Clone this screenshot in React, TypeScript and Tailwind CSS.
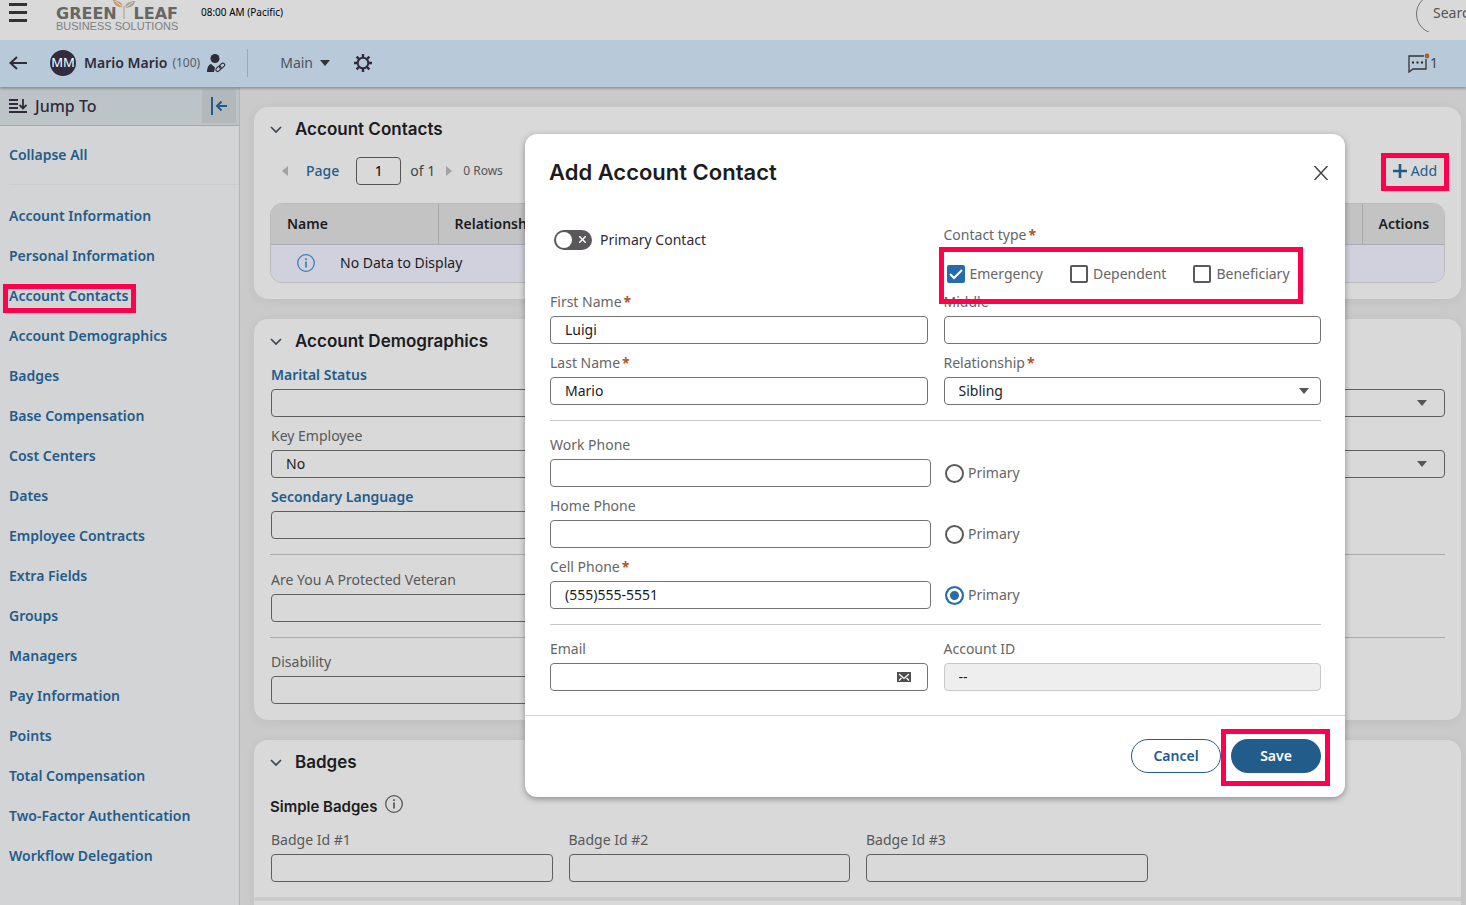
import clsx from 'clsx'
import type { ReactNode } from 'react'

const links = [
  'Account Information',
  'Personal Information',
  'Account Contacts',
  'Account Demographics',
  'Badges',
  'Base Compensation',
  'Cost Centers',
  'Dates',
  'Employee Contracts',
  'Extra Fields',
  'Groups',
  'Managers',
  'Pay Information',
  'Points',
  'Total Compensation',
  'Two-Factor Authentication',
  'Workflow Delegation',
]

const heading = "font-['Inter',sans-serif] font-semibold text-[#1c1c1f]"

// red frame drawn around the step the reader has to follow
function Highlight({ className }: { className: string }) {
  return <div className={clsx('pointer-events-none absolute z-10 border-5 border-[#ff004f]', className)} />
}

function Caret({ className }: { className?: string }) {
  return (
    <svg viewBox="0 0 10 6" className={clsx('h-[6px] w-[10px] fill-current', className)}>
      <path d="M0 0h10L5 6z" />
    </svg>
  )
}

function InfoIcon({ className }: { className: string }) {
  return (
    <svg viewBox="0 0 18 18" className={clsx('size-[18px] shrink-0 fill-none stroke-current', className)}>
      <circle cx="9" cy="9" r="8.3" strokeWidth="1.3" />
      <path d="M9 7.5v6M9 4.3v1.8" strokeWidth="1.7" />
    </svg>
  )
}

type FieldProps = {
  id: string
  label?: string
  value?: string
  required?: boolean
  strong?: boolean
  select?: boolean
  dim?: boolean
  disabled?: boolean
  className?: string
  children?: ReactNode
}

function Field({ id, label, value = '', required, strong, select, dim, disabled, className, children }: FieldProps) {
  const box = clsx(
    'h-7 w-full appearance-none rounded-[4px] border px-[14px] text-sm text-[#1c1c1f]',
    !select && 'pb-[2px]',
    disabled ? 'border-[#c9c9c9] bg-[#eeeeee]' : dim ? 'border-[#5f5f5f] bg-[#d9d9d9]' : 'border-[#737373] bg-white',
  )
  return (
    <div className={className}>
      <label
        htmlFor={id}
        className={clsx(
          'mb-[5px] block h-5 text-sm leading-[22px] whitespace-nowrap',
          strong ? 'font-semibold text-[#225c8b]' : dim ? 'text-[#56585a]' : 'text-[#666666]',
        )}
      >
        {label}
        {required && <span className="ml-[2px] font-bold text-[#a85a2a]">*</span>}
      </label>
      <div className="relative">
        {select ? (
          <select id={id} defaultValue={value} className={box}>
            <option>{value}</option>
          </select>
        ) : (
          <input id={id} defaultValue={value} disabled={disabled} className={box} />
        )}
        {select && (
          <Caret className={clsx('absolute top-[11px] text-[#555]', dim ? 'right-[18px]' : 'right-3')} />
        )}
        {children}
      </div>
    </div>
  )
}

function Card({ title, children }: { title: string; children: ReactNode }) {
  return (
    <section className="rounded-[14px] bg-[#d9d9d9] px-4 pb-4 shadow-[0_2px_12px_rgba(0,0,0,0.06)]">
      <div className="flex h-[45px] items-center">
        <svg viewBox="0 0 12 8" className="h-2 w-3 fill-none stroke-[#3c4650]">
          <path d="M1 1l5 5 5-5" strokeWidth="1.7" />
        </svg>
        <h2 className={clsx(heading, 'ml-[13px] text-[17px]')}>{title}</h2>
      </div>
      {children}
    </section>
  )
}

function Logo() {
  return (
    <div className="relative ml-[29px] w-[122px] pt-[5px] whitespace-nowrap">
      <svg viewBox="0 0 24 20" className="absolute top-0 left-14 h-5 w-6">
        <path d="M1 0c4 0 9 2 10 7C6 8 2 5 1 0z" fill="#c39a6b" />
        <path d="M23 1c-5 0-10 2-10 7 5 0 9-2 10-7z" fill="#a9a48e" />
        <path d="M3 1l8 6M21 2l-8 6" stroke="#dedad0" fill="none" />
        <path d="M12 6v13" stroke="#9c9c94" fill="none" />
      </svg>
      <div className="flex justify-between font-['DejaVu_Sans',sans-serif] text-base leading-[18px] font-bold text-[#666]">
        <span>GREEN</span>
        <span>LEAF</span>
      </div>
      <div className="font-['Liberation_Sans',sans-serif] text-[11px] leading-[6px] text-[#808080]">BUSINESS SOLUTIONS</div>
    </div>
  )
}

function TopBar() {
  return (
    <header className="flex h-10 shrink-0 bg-[#d9d9d9] pl-[9px]">
      <button aria-label="Menu" className="flex h-6 w-[18px] flex-col justify-center gap-[5px]">
        <span className="h-[3px] w-full bg-[#333]" />
        <span className="h-[3px] w-full bg-[#333]" />
        <span className="h-[3px] w-full bg-[#333]" />
      </button>
      <Logo />
      <span className="ml-[23px] text-[10px] leading-6 text-black">08:00 AM (Pacific)</span>
      <div className="ml-auto h-8 w-[50px] overflow-hidden">
        <input
          aria-label="Search"
          placeholder="Search"
          className="-mt-2 h-10 w-60 rounded-full border border-[#707070] px-4 pb-[2px] text-sm placeholder:text-[#555]"
        />
      </div>
    </header>
  )
}

function AccountBar() {
  return (
    <div className="z-10 flex h-[47px] shrink-0 items-center bg-[#b8c9d9] pr-7 pb-[2px] pl-[9px] text-[#2f2b3a] shadow-[0_2px_2px_rgba(0,0,0,0.25)]">
      <button aria-label="Back">
        <svg viewBox="0 0 18 14" className="h-[14px] w-[18px] fill-none stroke-current">
          <path d="M18 7H1.5M8 1L1.5 7 8 13" strokeWidth="2" />
        </svg>
      </button>
      <span className="ml-[23px] flex size-[26px] items-center justify-center rounded-full bg-[#322c3d] text-[13px] text-white">MM</span>
      <span className="ml-2 text-sm font-semibold">Mario Mario</span>
      <span className="ml-[5px] text-xs text-[#555b66]">(100)</span>
      <svg viewBox="0 0 20 20" className="ml-[6px] size-5">
        <circle cx="9" cy="5.5" r="4.5" fill="currentColor" />
        <path d="M1 19c0-5 2-7.500 4-8l4 3.500-1 4.500z" fill="currentColor" />
        <g fill="none" stroke="currentColor" strokeWidth="1.100">
          <rect x="9.500" y="14" width="6" height="3.600" rx="1.800" transform="rotate(-45 12.500 15.800)" />
          <rect x="13" y="11" width="6" height="3.600" rx="1.800" transform="rotate(-45 16 12.800)" />
        </g>
      </svg>
      <span className="ml-[21px] h-7 w-px bg-[#9aa9b8]" />
      <button className="ml-8 flex items-center gap-[7px] text-sm text-[#4d525c]">
        Main
        <Caret className="text-[#333]" />
      </button>
      <button aria-label="Settings" className="ml-[23px]">
        <svg viewBox="0 0 20 20" className="size-5 fill-none stroke-current">
          <circle cx="10" cy="10" r="5.300" strokeWidth="2" />
          <path
            d="M10 1v3.500M10 15.500V19M1 10h3.500M15.500 10H19M3.600 3.600l2.500 2.500M13.900 13.900l2.500 2.500M3.600 16.400l2.500-2.500M13.900 6.100l2.500-2.500"
            strokeWidth="2.400"
          />
        </svg>
      </button>
      <button aria-label="Messages" className="ml-auto flex items-center text-sm text-[#444]">
        <svg viewBox="0 0 22 20" className="h-5 w-[22px]">
          <path d="M1 3h17v13H5l-4 3z" fill="none" stroke="#333" strokeWidth="1.300" />
          <path d="M4 8.500h2v2H4zM8.500 8.500h2v2h-2zM13 8.500h2v2h-2z" fill="#222" />
          <circle cx="19" cy="3" r="3.200" fill="#b8c9d9" />
          <circle cx="19" cy="3" r="2.400" fill="#a8602c" />
        </svg>
        1
      </button>
    </div>
  )
}

function Sidebar() {
  return (
    <nav className="w-60 shrink-0 border-r border-[#b5b5b5] bg-[#d3d4d6] text-sm">
      <div className="flex h-[39px] items-center border-b border-[#a3a8aa] bg-[#bcc4c8] pl-[9px] text-[#2f2b3a]">
        <svg viewBox="0 0 18 14" className="h-[14px] w-[18px] fill-none stroke-current">
          <path d="M0 1h9M0 5h9M0 9h9M0 13h18M14 0v9M10.500 6l3.500 3.500L17.500 6" strokeWidth="1.800" />
        </svg>
        <span className="ml-2 text-base font-medium">Jump To</span>
        <button aria-label="Collapse panel" className="mr-[3px] ml-auto flex h-[34px] w-[34px] items-center justify-center bg-[#b3b9bb] text-[#225c8b]">
          <svg viewBox="0 0 16 18" className="h-[18px] w-4 fill-none stroke-current">
            <path d="M1 0v18M16 9H6M10.500 4.500L6 9l4.500 4.500" strokeWidth="2" />
          </svg>
        </button>
      </div>
      <div className="ml-[9px] flex h-[59px] items-center border-b border-[#c8cacc]">
        <button className="font-semibold text-[#225c8b]">Collapse All</button>
      </div>
      <ul className="mt-[11px] ml-[9px]">
        {links.map((link) => (
          <li key={link} className="flex h-10 items-center">
            <a href="#" className="relative font-semibold text-[#225c8b]">
              {link}
              {link === 'Account Contacts' && <Highlight className="-top-[2px] -right-2 -bottom-[7px] -left-[6px]" />}
            </a>
          </li>
        ))}
      </ul>
    </nav>
  )
}

function Contacts() {
  return (
    <Card title="Account Contacts">
      <div className="mt-[5px] flex h-7 items-center pr-2 pl-3 text-sm text-[#444]">
        <Caret className="-ml-[2px] rotate-90 text-[#a2a2a2]" />
        <label htmlFor="page" className="ml-4 font-medium text-[#225c8b]">Page</label>
        <input
          id="page"
          defaultValue="1"
          className="mr-[9px] ml-[17px] h-7 w-[45px] rounded-[4px] border border-[#555] pb-[2px] text-center text-black"
        />
        of 1
        <Caret className="ml-[9px] -rotate-90 text-[#a2a2a2]" />
        <span className="ml-[9px] text-xs text-[#555]">0 Rows</span>
        <button className="relative ml-auto flex items-center gap-1 text-[#225c8b]">
          <svg viewBox="0 0 14 14" className="size-[14px] stroke-current">
            <path d="M7 0v14M0 7h14" strokeWidth="2.600" />
          </svg>
          Add
          <Highlight className="-inset-x-3 -top-2 -bottom-[10px]" />
        </button>
      </div>
      <div className="mt-[18px] overflow-hidden rounded-xl border border-[#bababa]">
        <table className="w-full text-left text-sm text-[#1c1c1f]">
          <thead className="h-10 bg-[#c3c3c3]">
            <tr className="border-b border-[#a9abb0]">
              <th className="w-[167px] border-r border-[#a9a9a9] pl-4 font-semibold">Name</th>
              <th className="pl-4 font-semibold">Relationship</th>
              <th className="w-[82px] border-l border-[#a9a9a9] pl-4 font-semibold">Actions</th>
            </tr>
          </thead>
          <tbody>
            <tr className="h-[38px] bg-[#d0d1dc]">
              <td colSpan={3}>
                <div className="flex items-center gap-[25px] pl-[26px]">
                  <InfoIcon className="text-[#3a80b5]" />
                  No Data to Display
                </div>
              </td>
            </tr>
          </tbody>
        </table>
      </div>
    </Card>
  )
}

function Demographics() {
  return (
    <Card title="Account Demographics">
      <div className="grid grid-cols-4 gap-x-4 gap-y-2 pl-px">
        <Field id="marital" label="Marital Status" strong select dim />
        <Field id="ethnicity" className="col-start-4" select dim />
        <Field id="key" label="Key Employee" value="No" select dim />
        <Field id="language" className="col-start-4" select dim />
        <Field id="secondary" label="Secondary Language" strong select dim />
      </div>
      <hr className="mt-[15px] mb-[14px] border-[#a9a9a9]" />
      <div className="grid grid-cols-4 gap-x-4 pl-px">
        <Field id="veteran" label="Are You A Protected Veteran" select dim />
      </div>
      <hr className="mt-[15px] mb-[13px] border-[#a9a9a9]" />
      <div className="grid grid-cols-4 gap-x-4 pl-px">
        <Field id="disability" label="Disability" select dim />
      </div>
    </Card>
  )
}

function Badges() {
  return (
    <Card title="Badges">
      <div className="mt-[10px] flex h-6 items-center gap-2">
        <h3 className={clsx(heading, 'text-[15px]')}>Simple Badges</h3>
        <InfoIcon className="mb-[6px] text-[#555]" />
      </div>
      <div className="mt-[10px] grid grid-cols-4 gap-x-4 pl-px">
        <Field id="badge1" label="Badge Id #1" dim />
        <Field id="badge2" label="Badge Id #2" dim />
        <Field id="badge3" label="Badge Id #3" dim />
      </div>
      <div className="-mx-4 mt-[15px] h-1 bg-[#cbcbcb]" />
    </Card>
  )
}

function CheckOption({ label, checked }: { label: string; checked?: boolean }) {
  return (
    <label className="flex items-center gap-[5px]">
      <span className="relative flex">
        <input
          type="checkbox"
          defaultChecked={checked}
          className="size-[18px] appearance-none rounded-[2px] border-2 border-[#5a5a5a] bg-white checked:border-[#256ca8] checked:bg-[#256ca8]"
        />
        {checked && (
          <svg viewBox="0 0 18 18" className="pointer-events-none absolute inset-0 fill-none stroke-white">
            <path d="M3 9l4 4 8-8" strokeWidth="2" />
          </svg>
        )}
      </span>
      {label}
    </label>
  )
}

function PhoneRow({ id, label, value, primary, required }: { id: string; label: string; value?: string; primary?: boolean; required?: boolean }) {
  return (
    <div className="flex items-end gap-[14px]">
      <Field id={id} label={label} value={value} required={required} className="w-[381px]" />
      <label className="flex h-7 items-center gap-1">
        <input
          type="radio"
          name="primary-phone"
          defaultChecked={primary}
          className="size-[19px] appearance-none rounded-full border-2 border-[#5a5a5a] bg-white checked:border-[#256ca8] checked:bg-[#256ca8] checked:shadow-[inset_0_0_0_3px_white]"
        />
        Primary
      </label>
    </div>
  )
}

function ContactDialog() {
  return (
    <div
      role="dialog"
      aria-labelledby="dialog-title"
      className="w-[820px] rounded-xl bg-white text-sm text-[#666] shadow-[0_2px_6px_rgba(0,0,0,0.35)]"
    >
      <div className="flex h-[77px] items-center justify-between pr-[17px] pl-6">
        <h1 id="dialog-title" className={clsx(heading, 'text-[22px]')}>Add Account Contact</h1>
        <button aria-label="Close">
          <svg viewBox="0 0 14 14" className="size-[14px] fill-none stroke-[#444]">
            <path d="M.5 0l13 14M13.500 0L.5 14" strokeWidth="1.500" />
          </svg>
        </button>
      </div>
      <form className="px-6 pt-[14px] pb-6 pl-[25px]">
        <div className="grid h-[66px] grid-cols-2 gap-x-4">
          <label className="flex h-[30px] items-center gap-2 pl-1 text-[#2f2b3a]">
            <span className="relative flex">
              <input type="checkbox" role="switch" className="h-5 w-[38px] appearance-none rounded-full bg-[#5a585a]" />
              <span className="absolute top-[2px] left-[2px] size-4 rounded-full bg-white" />
              <svg viewBox="0 0 7 7" className="absolute top-[6px] right-[6px] size-[7px] stroke-white">
                <path d="M0 0l7 7M7 0L0 7" strokeWidth="1.500" />
              </svg>
            </span>
            Primary Contact
          </label>
          <fieldset>
            <legend className="h-5">
              Contact type<span className="ml-[2px] font-bold text-[#a85a2a]">*</span>
            </legend>
            <div className="relative mt-[19px] ml-[3px] flex w-max gap-[27px]">
              <CheckOption label="Emergency" checked />
              <CheckOption label="Dependent" />
              <CheckOption label="Beneficiary" />
              <Highlight className="-top-[17px] -right-[13px] -bottom-5 -left-2" />
            </div>
          </fieldset>
        </div>
        <div className="grid grid-cols-2 gap-x-4 gap-y-2">
          <Field id="first" label="First Name" value="Luigi" required />
          <Field id="middle" label="Middle" />
          <Field id="last" label="Last Name" value="Mario" required />
          <Field id="relationship" label="Relationship" value="Sibling" required select />
        </div>
        <hr className="mt-[15px] mb-[13px] border-[#c9c9c9]" />
        <div className="flex flex-col gap-2">
          <PhoneRow id="work" label="Work Phone" />
          <PhoneRow id="home" label="Home Phone" />
          <PhoneRow id="cell" label="Cell Phone" value="(555)555-5551" required primary />
        </div>
        <hr className="mt-[15px] mb-[13px] border-[#c9c9c9]" />
        <div className="grid grid-cols-2 gap-x-4">
          <Field id="email" label="Email">
            <svg viewBox="0 0 14 10" className="absolute top-[9px] right-[17px] h-[10px] w-[14px]">
              <path d="M0 0h14v10H0z" fill="#4f4f4f" />
              <path d="M2 2l5 4.500L12 2M2 8.500l2.500-2.500M12 8.500L9.500 6" fill="none" stroke="#fff" strokeWidth="1.300" />
            </svg>
          </Field>
          <Field id="account-id" label="Account ID" value="--" disabled />
        </div>
      </form>
      <div className="flex justify-end gap-[10px] border-t border-[#d4d4d4] px-6 pt-[23px] pb-6">
        <button className="h-[34px] w-[90px] rounded-full border border-[#225c8b] font-semibold text-[#225c8b]">Cancel</button>
        <button className="relative h-[34px] w-[90px] rounded-full bg-[#225c8b] font-semibold text-white">
          Save
          <Highlight className="-top-[10px] -right-[9px] -bottom-[13px] -left-[10px]" />
        </button>
      </div>
    </div>
  )
}

export default function App() {
  return (
    <div className="relative flex h-screen flex-col overflow-hidden bg-[#cacaca] font-['Noto_Sans',sans-serif]">
      <TopBar />
      <AccountBar />
      <div className="flex min-h-0 flex-1">
        <Sidebar />
        <main className="flex min-w-0 flex-1 flex-col gap-5 pt-5 pr-[5px] pl-[14px]">
          <Contacts />
          <Demographics />
          <Badges />
        </main>
      </div>
      <div className="absolute inset-0 z-20 flex items-start justify-end pt-[134px] pr-[121px]">
        <ContactDialog />
      </div>
    </div>
  )
}
